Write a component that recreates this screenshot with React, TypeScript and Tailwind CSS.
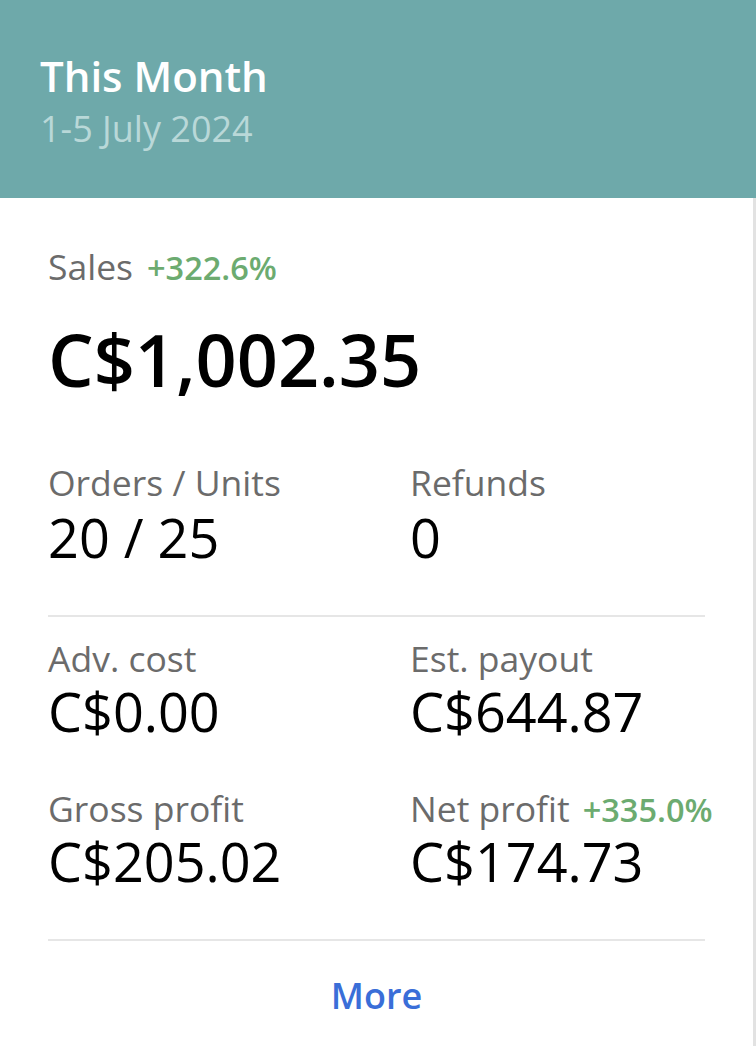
import React from "react";

const font = { fontFamily: '"Open Sans", "Noto Sans", sans-serif' };

function Label({ children }: { children: React.ReactNode }) {
  return <div className="text-[35.5px] leading-[36px] text-[#6b6b6b] whitespace-nowrap">{children}</div>;
}
function Value({ children }: { children: React.ReactNode }) {
  return <div className="mt-[8px] text-[54px] leading-[54px] text-black whitespace-nowrap">{children}</div>;
}

export default function App() {
  return (
    <div style={font} className="w-[756px] h-[1046px] bg-white overflow-hidden flex flex-col">
      <div className="bg-[#6ea9aa] h-[198px] pl-[40px] pt-[55px]">
        <div className="text-[42px] leading-[42px] font-semibold text-white">This Month</div>
        <div className="mt-[14px] text-[36px] leading-[36px] text-[#b9d8d8]">1-5 July 2024</div>
      </div>
      <div className="flex-1 flex">
        <div className="flex-1 min-w-0 pl-[48px] pr-[48px] pt-[50px]">
          <div className="flex items-baseline gap-[14px]">
            <span className="text-[35.5px] leading-[36px] text-[#6b6b6b]">Sales</span>
            <span className="text-[32.5px] leading-[32px] font-semibold text-[#6cab70]">+322.6%</span>
          </div>
          <div className="mt-[39px] text-[72px] leading-[72px] font-semibold text-black">C$1,002.35</div>

          <div className="mt-[69px] grid grid-cols-[362px_minmax(0,1fr)]">
            <div>
              <Label>Orders / Units</Label>
              <div className="mt-[10px] text-[54px] leading-[54px] text-black">20 / 25</div>
            </div>
            <div>
              <Label>Refunds</Label>
              <div className="mt-[10px] text-[54px] leading-[54px] text-black">0</div>
            </div>
          </div>

          <div className="mt-[51px] h-[2px] bg-[#e6e6e6]" />

          <div className="mt-[23px] grid grid-cols-[362px_minmax(0,1fr)]">
            <div>
              <Label>Adv. cost</Label>
              <Value>C$0.00</Value>
            </div>
            <div>
              <Label>Est. payout</Label>
              <Value>C$644.87</Value>
            </div>
          </div>

          <div className="mt-[52px] grid grid-cols-[362px_minmax(0,1fr)]">
            <div>
              <Label>Gross profit</Label>
              <Value>C$205.02</Value>
            </div>
            <div className="min-w-0">
              <div className="flex items-baseline gap-[13px] whitespace-nowrap">
                <span className="text-[35.5px] leading-[36px] text-[#6b6b6b]">Net profit</span>
                <span className="text-[32.5px] leading-[32px] font-semibold text-[#6cab70]">+335.0%</span>
              </div>
              <Value>C$174.73</Value>
            </div>
          </div>

          <div className="mt-[51px] h-[2px] bg-[#e6e6e6]" />

          <div className="mt-[37px] text-center text-[36px] leading-[36px] font-semibold text-[#3a6ed8]">More</div>
        </div>
        <div className="w-[3px] shrink-0 bg-[#e2e2e2]" />
      </div>
    </div>
  );
}
